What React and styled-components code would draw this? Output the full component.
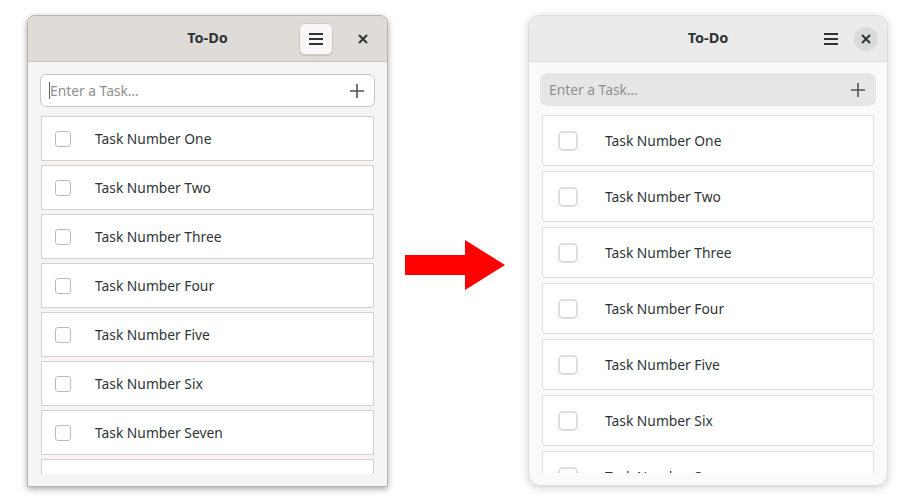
import React from "react"
import styled, { createGlobalStyle } from "styled-components"

const tasks = ["One", "Two", "Three", "Four", "Five", "Six", "Seven", "Eight"]

const themes = {
  old: {
    radius: "8px 8px 0 0",
    frame: "1px solid #b7b2ad",
    shadow: "0 2px 6px rgba(0,0,0,0.35)",
    headBg: "#dfdcd8",
    headLine: "#c6c1bc",
    bodyBg: "#f6f5f4",
    inputBg: "#ffffff",
    inputBorder: "1px solid #cdc7c2",
    inputRadius: "6px",
    rowBorder: "#d6d1cc",
    rowH: 45,
    rowGap: 4,
    boxSize: 16,
    boxBorder: "1px solid #c0bab5",
    boxRadius: "3px",
    boxLeft: 13,
    textLeft: 24,
  },
  adw: {
    radius: "12px",
    frame: "1px solid #dcdcdc",
    shadow: "0 2px 10px rgba(0,0,0,0.18)",
    headBg: "#ebebeb",
    headLine: "#dadada",
    bodyBg: "#fafafa",
    inputBg: "#e6e6e6",
    inputBorder: "1px solid transparent",
    inputRadius: "7px",
    rowBorder: "#e0e0e0",
    rowH: 51,
    rowGap: 5,
    boxSize: 20,
    boxBorder: "2px solid #dedede",
    boxRadius: "5px",
    boxLeft: 15,
    textLeft: 27,
  },
}

/**
 * Styled Components
 */
const GlobalStyle = createGlobalStyle`
  body {
    margin: 0;
    background: #ffffff;
    font-family: "Noto Sans", "Open Sans", sans-serif;
  }
`
const Page = styled.div`
  display: flex;
  align-items: flex-start;
  padding: 15px 0 0 27px;
  height: 485px;
`
const Window = styled.div`
  width: ${(p) => p.$w}px;
  height: ${(p) => p.$h}px;
  display: flex;
  flex-direction: column;
  border: ${(p) => p.$t.frame};
  border-radius: ${(p) => p.$t.radius};
  box-shadow: ${(p) => p.$t.shadow};
  background: ${(p) => p.$t.bodyBg};
  overflow: hidden;
  box-sizing: border-box;
`
const HeaderBar = styled.div`
  height: 45px;
  flex-shrink: 0;
  display: flex;
  align-items: center;
  justify-content: flex-end;
  position: relative;
  padding-right: ${(p) => p.$pr}px;
  gap: ${(p) => p.$gap}px;
  background: ${(p) => p.$t.headBg};
  border-bottom: 1px solid ${(p) => p.$t.headLine};
`
const Title = styled.div`
  position: absolute;
  left: 0;
  right: 0;
  top: 11px;
  text-align: center;
  font-weight: 700;
  font-size: 14.5px;
  line-height: 20px;
  color: #2e3436;
  pointer-events: none;
`
const MenuButton = styled.div`
  width: 34px;
  height: 32px;
  display: flex;
  align-items: center;
  justify-content: center;
  border-radius: 6px;
  background: ${(p) => (p.$raised ? "#f8f7f6" : "transparent")};
  box-shadow: ${(p) => (p.$raised ? "0 1px 1px rgba(0,0,0,0.12)" : "none")};
  border: ${(p) => (p.$raised ? "1px solid #d0cbc6" : "1px solid transparent")};
  box-sizing: border-box;
`
const CloseButton = styled.div`
  width: 24px;
  height: 24px;
  display: flex;
  align-items: center;
  justify-content: center;
  border-radius: 50%;
  background: ${(p) => (p.$round ? "#dadada" : "transparent")};
`
const Body = styled.div`
  flex: 1;
  min-height: 0;
  padding: ${(p) => p.$pad};
  display: flex;
  flex-direction: column;
  overflow: hidden;
`
const Entry = styled.div`
  height: 33px;
  flex-shrink: 0;
  display: flex;
  align-items: center;
  padding: 0 9px 0 8px;
  background: ${(p) => p.$t.inputBg};
  border: ${(p) => p.$t.inputBorder};
  border-radius: ${(p) => p.$t.inputRadius};
  box-sizing: border-box;
  margin-bottom: 9px;
`
const Placeholder = styled.div`
  flex: 1;
  font-size: 13.8px;
  color: #8f9090;
  display: flex;
  align-items: center;
`
const Caret = styled.span`
  display: inline-block;
  width: 1px;
  height: 17px;
  background: #5c6466;
`
const List = styled.div`
  flex: 1;
  min-height: 0;
  overflow: hidden;
  display: flex;
  flex-direction: column;
  gap: ${(p) => p.$t.rowGap}px;
  padding: ${(p) => p.$inset};
`
const Row = styled.div`
  height: ${(p) => p.$t.rowH}px;
  flex-shrink: 0;
  display: flex;
  align-items: center;
  background: #ffffff;
  border: 1px solid ${(p) => p.$t.rowBorder};
  box-sizing: border-box;
  padding-left: ${(p) => p.$t.boxLeft}px;
`
const Check = styled.div`
  width: ${(p) => p.$t.boxSize}px;
  height: ${(p) => p.$t.boxSize}px;
  border: ${(p) => p.$t.boxBorder};
  border-radius: ${(p) => p.$t.boxRadius};
  box-sizing: border-box;
  background: #ffffff;
  margin-right: ${(p) => p.$t.textLeft}px;
`
const Label = styled.div`
  font-size: 13.8px;
  color: #2e3436;
`
const ArrowWrap = styled.div`
  margin: 225px 23px 0 17px;
  width: 100px;
  height: 50px;
`

/**
 * Icons
 */
const Hamburger = () => (
  <svg width="16" height="16" viewBox="0 0 16 16">
    <path d="M1 3h14M1 8h14M1 13h14" stroke="#2e3436" strokeWidth="2" fill="none" />
  </svg>
)
const Cross = () => (
  <svg width="10" height="10" viewBox="0 0 10 10">
    <path d="M1 1l8 8M9 1l-8 8" stroke="#2e3436" strokeWidth="2" fill="none" />
  </svg>
)
const Plus = () => (
  <svg width="16" height="16" viewBox="0 0 16 16">
    <path d="M8 1v14M1 8h14" stroke="#4d5557" strokeWidth="1.6" fill="none" />
  </svg>
)
const Arrow = () => (
  <svg width="100" height="50" viewBox="0 0 100 50">
    <polygon points="0,15 60,15 60,0 100,25 60,50 60,35 0,35" fill="#ff0000" />
  </svg>
)

/**
 * Main Component
 */
const TodoWindow = ({ t, w, h, raised, round, pad, inset, pr, gap }) => (
  <Window $t={t} $w={w} $h={h}>
    <HeaderBar $t={t} $pr={pr} $gap={gap}>
      <Title>To-Do</Title>
      <MenuButton $raised={raised}>
        <Hamburger />
      </MenuButton>
      <CloseButton $round={round}>
        <Cross />
      </CloseButton>
    </HeaderBar>
    <Body $pad={pad}>
      <Entry $t={t}>
        <Placeholder>
          {raised && <Caret />}
          Enter a Task…
        </Placeholder>
        <Plus />
      </Entry>
      <List $t={t} $inset={inset}>
        {tasks.map((n) => (
          <Row key={n} $t={t}>
            <Check $t={t} />
            <Label>Task Number {n}</Label>
          </Row>
        ))}
      </List>
    </Body>
  </Window>
)

const App = () => (
  <>
    <GlobalStyle />
    <Page>
      <TodoWindow
        t={themes.old}
        w={361}
        h={472}
        raised
        pad="12px 12px 12px 12px"
        inset="0 1px"
        pr={12}
        gap={18}
      />
      <ArrowWrap>
        <Arrow />
      </ArrowWrap>
      <TodoWindow
        t={themes.adw}
        w={360}
        h={471}
        round
        pad="11px 11px 12px 11px"
        inset="0 2px"
        pr={9}
        gap={6}
      />
    </Page>
  </>
)

export default App
